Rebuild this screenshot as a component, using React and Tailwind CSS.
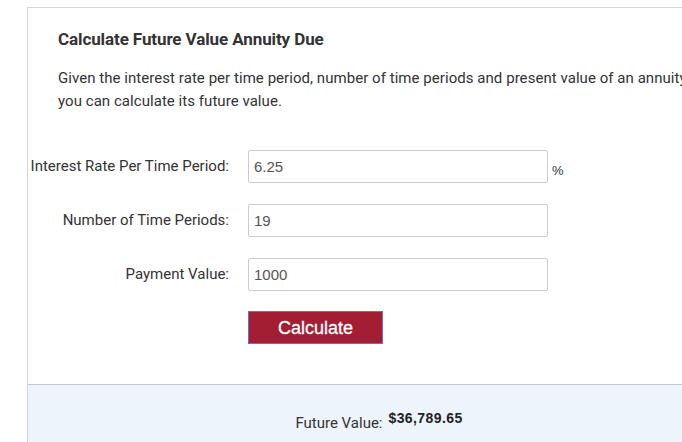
export default function App() {
  const sans = { fontFamily: '"Source Sans Pro", Roboto, "Liberation Sans", sans-serif' };
  const rows = [
    { label: "Interest Rate Per Time Period:", value: "6.25", suffix: "%" },
    { label: "Number of Time Periods:", value: "19" },
    { label: "Payment Value:", value: "1000" },
  ];
  return (
    <div className="w-[682px] h-[442px] overflow-hidden bg-white text-[#333]" style={sans}>
      <div className="ml-[27px] mt-[7px] w-[703px] border-t border-l border-[#d6d6d6]">
        <div className="pl-[30px] pt-[21px]">
          <h2 className="text-[17px] font-bold leading-[20px] tracking-[-0.1px]">Calculate Future Value Annuity Due</h2>
          <p className="mt-[18px] text-[15px] leading-[23px] tracking-[0.05px] w-[720px] whitespace-nowrap">
            Given the interest rate per time period, number of time periods and present value of an annuity
            <br />
            you can calculate its future value.
          </p>
        </div>
        <div className="mt-[37px] flex flex-col gap-[21px] -ml-[27px]">
          {rows.map((r) => (
            <div key={r.label} className="flex items-center">
              <div className="w-[228px] text-right text-[15px] whitespace-nowrap">{r.label}</div>
              <input
                readOnly
                value={r.value}
                className="ml-[19px] w-[300px] h-[33px] border border-[#ccc] rounded-[2px] px-[5px] text-[15px] text-[#555] outline-none"
                style={{ fontFamily: '"Liberation Sans", Arial, sans-serif' }}
              />
              {r.suffix && (
                <span className="ml-[4px] mt-[8px] text-[13px] text-[#333]" style={{ fontFamily: '"Liberation Sans", Arial, sans-serif' }}>
                  {r.suffix}
                </span>
              )}
            </div>
          ))}
          <div className="flex -mt-[1px]">
            <button
              className="ml-[247px] w-[135px] h-[33px] bg-[#a31d33] border border-[#6f6fb8] text-white text-[18px] leading-none"
              style={{ fontFamily: '"Liberation Sans", Arial, sans-serif', WebkitTextStroke: '0.3px white' }}
            >
              Calculate
            </button>
          </div>
        </div>
        <div className="mt-[40px] h-[60px] border-t border-[#c5c9ce] bg-[#edf4fc] flex justify-center pt-[27px]">
          <span className="text-[15px]">Future Value:</span>
          <span className="ml-[6px] -mt-[4px] text-[14px] font-bold tracking-[0.4px] text-[#222]" style={{ fontFamily: '"Liberation Sans", Arial, sans-serif' }}>
            $36,789.65
          </span>
        </div>
      </div>
    </div>
  );
}
